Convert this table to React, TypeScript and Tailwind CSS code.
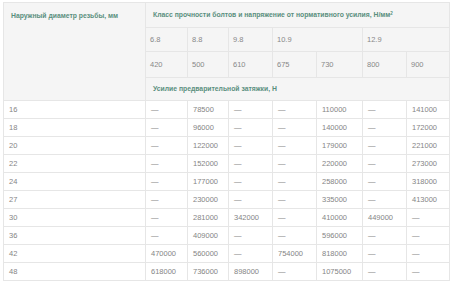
const widths = [142, 42, 41, 44, 44, 46, 44, 43];

const rows: string[][] = [
  ["16", "—", "78500", "—", "—", "110000", "—", "141000"],
  ["18", "—", "96000", "—", "—", "140000", "—", "172000"],
  ["20", "—", "122000", "—", "—", "179000", "—", "221000"],
  ["22", "—", "152000", "—", "—", "220000", "—", "273000"],
  ["24", "—", "177000", "—", "—", "258000", "—", "318000"],
  ["27", "—", "230000", "—", "—", "335000", "—", "413000"],
  ["30", "—", "281000", "342000", "—", "410000", "449000", "—"],
  ["36", "—", "409000", "—", "—", "596000", "—", "—"],
  ["42", "470000", "560000", "—", "754000", "818000", "—", "—"],
  ["48", "618000", "736000", "898000", "—", "1075000", "—", "—"],
];

const th = "border border-[#e6e6e6] bg-[#f5f5f5] text-left align-middle font-bold text-[6.8px] text-[#5a8f7e]";
const thGray = "border border-[#e6e6e6] bg-[#f5f5f5] text-left align-middle font-normal px-[4px] text-[#888888]";
const td = "border border-[#e6e6e6] bg-white text-left align-middle px-[5px] text-[#858585]";

export default function App() {
  return (
    <div className="w-[454px] h-[287px] bg-white pt-[2px] pl-[3px] font-['Liberation_Sans',Arial,sans-serif] text-[7.5px] leading-none">
      <table className="table-fixed border-collapse w-[446px]">
        <colgroup>
          {widths.map((w, i) => (
            <col key={i} style={{ width: w }} />
          ))}
        </colgroup>
        <thead>
          <tr className="h-[25px]">
            <th rowSpan={4} className={th + " align-top pt-[10px] px-[7px]"}>
              Наружный диаметр резьбы, мм
            </th>
            <th colSpan={7} className={th + " px-[7px]"}>
              Класс прочности болтов и напряжение от нормативного усилия, Н/мм
              <span className="relative -top-[2px] text-[4.5px]">2</span>
            </th>
          </tr>
          <tr className="h-[24px]">
            <th className={thGray}>6.8</th>
            <th className={thGray}>8.8</th>
            <th className={thGray}>9.8</th>
            <th colSpan={2} className={thGray}>10.9</th>
            <th colSpan={2} className={thGray}>12.9</th>
          </tr>
          <tr className="h-[26px]">
            {["420", "500", "610", "675", "730", "800", "900"].map((v) => (
              <th key={v} className={thGray}>
                {v}
              </th>
            ))}
          </tr>
          <tr className="h-[23px]">
            <th colSpan={7} className={th + " px-[7px]"}>
              Усилие предварительной затяжки, Н
            </th>
          </tr>
        </thead>
        <tbody>
          {rows.map((r) => (
            <tr key={r[0]} className="h-[18px]">
              {r.map((c, i) => (
                <td key={i} className={td}>
                  {c}
                </td>
              ))}
            </tr>
          ))}
        </tbody>
      </table>
    </div>
  );
}
